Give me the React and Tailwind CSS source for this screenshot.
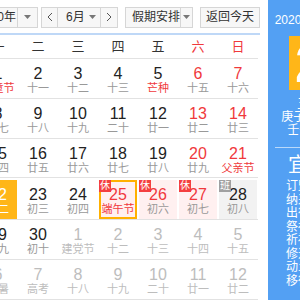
import React from "react";

const Arrow = () => (
  <svg width="7" height="4" viewBox="0 0 7 4">
    <path d="M0 0h7L3.5 4z" fill="#777" />
  </svg>
);

const Chev = ({ dir }) => (
  <svg width="6" height="10" viewBox="0 0 6 10">
    <path d={dir === "l" ? "M5 1L1 5l4 4" : "M1 1l4 4-4 4"} fill="none" stroke="#555" strokeWidth="1" />
  </svg>
);

const weeks = ["一", "二", "三", "四", "五", "六", "日"];

const rows = [
  [
    { d: "1", l: "儿童节", lr: 1 },
    { d: "2", l: "十一" },
    { d: "3", l: "十二" },
    { d: "4", l: "十三" },
    { d: "5", l: "芒种", lr: 1 },
    { d: "6", l: "十五", red: 1 },
    { d: "7", l: "十六", red: 1 },
  ],
  [
    { d: "8", l: "十七" },
    { d: "9", l: "十八" },
    { d: "10", l: "十九" },
    { d: "11", l: "二十" },
    { d: "12", l: "廿一" },
    { d: "13", l: "廿二", red: 1 },
    { d: "14", l: "廿三", red: 1 },
  ],
  [
    { d: "15", l: "廿四" },
    { d: "16", l: "廿五" },
    { d: "17", l: "廿六" },
    { d: "18", l: "廿七" },
    { d: "19", l: "廿八" },
    { d: "20", l: "廿九", red: 1 },
    { d: "21", l: "父亲节", red: 1, lr: 1 },
  ],
  [
    { d: "22", l: "初二", today: 1 },
    { d: "23", l: "初三" },
    { d: "24", l: "初四" },
    { d: "25", l: "端午节", red: 1, lr: 1, rest: 1, sel: 1 },
    { d: "26", l: "初六", red: 1, rest: 1 },
    { d: "27", l: "初七", red: 1, rest: 1 },
    { d: "28", l: "初八", work: 1 },
  ],
  [
    { d: "29", l: "初九" },
    { d: "30", l: "初十" },
    { d: "1", l: "建党节", gray: 1 },
    { d: "2", l: "十二", gray: 1 },
    { d: "3", l: "十三", gray: 1 },
    { d: "4", l: "十四", gray: 1 },
    { d: "5", l: "十五", gray: 1 },
  ],
  [
    { d: "6", l: "小暑", gray: 1 },
    { d: "7", l: "高考", gray: 1 },
    { d: "8", l: "十八", gray: 1 },
    { d: "9", l: "十九", gray: 1 },
    { d: "10", l: "二十", gray: 1 },
    { d: "11", l: "廿一", gray: 1 },
    { d: "12", l: "廿二", gray: 1 },
  ],
];

const yi = ["订盟", "纳采", "出行", "祭祀", "祈福", "修造", "动土", "移徙"];
const ji = ["开市", "立券", "纳财", "安葬", "破土", "作灶"];

function Cell({ c }) {
  let box = "relative mx-px h-full flex flex-col items-center pt-[7px]";
  if (c.today) box = "relative mx-px h-full flex flex-col items-center pt-[7px] bg-[#ffb618]";
  else if (c.sel) box = "relative mx-px h-full flex flex-col items-center pt-[5px] bg-[#fff0f0] border-2 border-[#ffb000]";
  else if (c.rest) box = "relative mx-px h-full flex flex-col items-center pt-[7px] bg-[#fff0f0]";
  else if (c.work) box = "relative mx-px h-full flex flex-col items-center pt-[7px] bg-[#f2f2f2]";

  const num = c.today
    ? "text-white"
    : c.gray
    ? "text-[#bdbdbd]"
    : c.red
    ? "text-[#f0393c]"
    : "text-[#222]";
  const lun = c.today
    ? "text-white"
    : c.gray
    ? "text-[#bdbdbd]"
    : c.lr
    ? "text-[#f0393c]"
    : "text-[#999]";

  return (
    <div className={box}>
      {c.rest && (
        <span
          className={
            c.sel
              ? "absolute -top-[2px] -left-[2px] w-[12px] h-[12px] bg-[#f43f3f] text-white text-[10px] leading-[12px] text-center"
              : "absolute top-0 left-0 w-[12px] h-[12px] bg-[#f43f3f] text-white text-[10px] leading-[12px] text-center"
          }
        >
          休
        </span>
      )}
      {c.work && (
        <span className="absolute top-0 left-0 w-[12px] h-[12px] bg-[#a0a0a0] text-white text-[10px] leading-[12px] text-center">
          班
        </span>
      )}
      <span className={`text-[16px] leading-[16px] ${num}`}>{c.d}</span>
      <span className={`text-[11px] leading-[12px] whitespace-nowrap ${lun}`}>{c.l}</span>
    </div>
  );
}

export default function App() {
  return (
    <div className="w-[300px] h-[300px] overflow-hidden bg-white flex font-['Liberation_Sans','Noto_Sans_CJK_SC',sans-serif] text-[#333]">
      {/* 日历主体 */}
      <div className="ml-[-22px] w-[282px] shrink-0 flex flex-col">
        <div className="mt-[7px] h-[21px] flex text-[12px]">
          <div className="w-[60px] h-full flex border border-[#d6d6d6] bg-[#f7f7f7]">
            <span className="flex-1 flex items-center justify-end pr-[1px] whitespace-nowrap overflow-hidden">2020年</span>
            <span className="w-[20px] border-l border-[#d6d6d6] flex items-center justify-center">
              <Arrow />
            </span>
          </div>
          <div className="ml-[3px] w-[77px] h-full flex border border-[#d6d6d6] bg-[#f7f7f7]">
            <span className="w-[16px] border-r border-[#d6d6d6] flex items-center justify-center">
              <Chev dir="l" />
            </span>
            <span className="flex-1 flex items-center justify-between pl-[8px] pr-[4px]">
              6月
              <Arrow />
            </span>
            <span className="w-[17px] border-l border-[#d6d6d6] flex items-center justify-center">
              <Chev dir="r" />
            </span>
          </div>
          <div className="ml-[7px] w-[68px] h-full flex border border-[#d6d6d6] bg-[#f7f7f7]">
            <span className="flex-1 flex items-center pl-[6px] whitespace-nowrap">假期安排</span>
            <span className="w-[15px] border-l border-[#d6d6d6] flex items-center justify-center">
              <Arrow />
            </span>
          </div>
          <div className="ml-[7px] w-[60px] h-full flex items-center justify-center border border-[#d6d6d6] bg-[#f7f7f7] whitespace-nowrap">
            返回今天
          </div>
        </div>

        <div className="mt-[5px] w-[282px] h-[2px] bg-[#bfd8f7]" />

        <div className="w-[280px] h-[24px] grid grid-cols-[repeat(7,40px)] items-center text-[13px] border-b border-[#e2e2e2]">
          {weeks.map((w, i) => (
            <span key={w} className={i >= 5 ? "text-center text-[#f0393c]" : "text-center text-[#333]"}>
              {w}
            </span>
          ))}
        </div>

        {rows.map((r, i) => (
          <div
            key={i}
            className={
              i === 3
                ? "w-[280px] h-[42px] pt-[2px] grid grid-cols-[repeat(7,40px)] border-b border-[#e2e2e2]"
                : "w-[280px] h-[40px] grid grid-cols-[repeat(7,40px)] border-b border-[#e2e2e2]"
            }
          >
            {r.map((c, j) => (
              <Cell key={j} c={c} />
            ))}
          </div>
        ))}
      </div>

      {/* 右侧详情 */}
      <div className="ml-[8px] w-[114px] shrink-0 h-full bg-[#53a0f3] text-white flex flex-col items-center">
        <div className="mt-[13px] text-[12px] leading-[14px] whitespace-nowrap">2020-06-22 星期一</div>
        <div className="mt-[9px] w-[72px] h-[54px] bg-[#ffb618] flex items-center justify-center text-[54px] font-bold leading-none">
          22
        </div>
        <div className="mt-[6px] text-[14px] leading-[14px] whitespace-nowrap">五月初二</div>
        <div className="text-[12px] leading-[14px] whitespace-nowrap">庚子年 【鼠年】</div>
        <div className="text-[12px] leading-[13px] whitespace-nowrap">壬午月 丁卯日</div>
        <div className="mt-[10px] w-[100px] h-px bg-white/60" />
        <div className="mt-[5px] w-full px-[6px] grid grid-cols-[48px_1fr]">
          <div className="flex flex-col items-center">
            <span className="text-[20px] leading-[24px]">宜</span>
            <div className="mt-[3px] flex flex-col items-center text-[12px] leading-[13.5px]">
              {yi.map((t) => (
                <span key={t}>{t}</span>
              ))}
            </div>
          </div>
          <div className="flex flex-col items-center">
            <span className="text-[20px] leading-[24px]">忌</span>
            <div className="mt-[3px] flex flex-col items-center text-[12px] leading-[13.5px]">
              {ji.map((t) => (
                <span key={t}>{t}</span>
              ))}
            </div>
          </div>
        </div>
      </div>
    </div>
  );
}
